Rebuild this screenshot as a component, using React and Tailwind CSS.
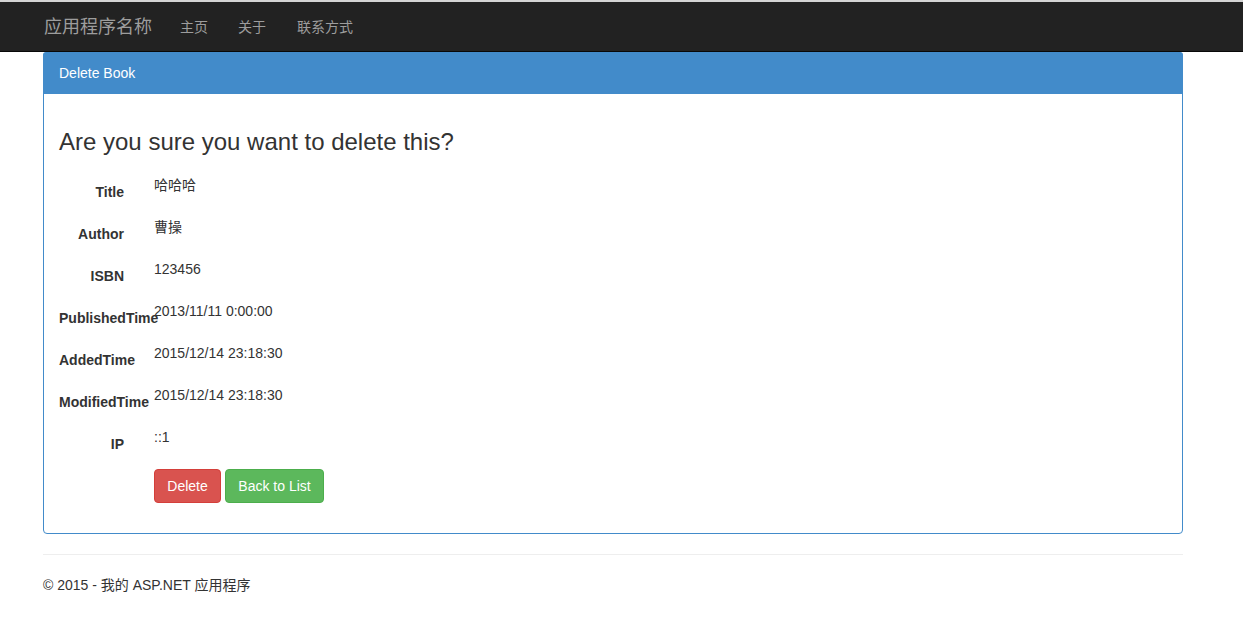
export default function App() {
  const font = { fontFamily: '"Liberation Sans", Arial, "Noto Sans CJK SC", sans-serif' };
  const rows = [
    ["Title", "哈哈哈"],
    ["Author", "曹操"],
    ["ISBN", "123456"],
    ["PublishedTime", "2013/11/11 0:00:00"],
    ["AddedTime", "2015/12/14 23:18:30"],
    ["ModifiedTime", "2015/12/14 23:18:30"],
    ["IP", "::1"],
  ];
  return (
    <div className="min-h-[635px] bg-white text-[14px] text-[#333]" style={font}>
      <div className="h-[2px] bg-[#d4d4d4]" />
      <nav className="h-[50px] bg-[#222] border-b border-[#080808]">
        <div className="pl-[44px] w-[1183px] h-full flex items-center">
          <span className="text-[18px] text-[#9d9d9d] leading-[20px]">应用程序名称</span>
          <span className="ml-[28px] text-[#9d9d9d] leading-[20px]">主页</span>
          <span className="ml-[30px] text-[#9d9d9d] leading-[20px]">关于</span>
          <span className="ml-[31px] text-[#9d9d9d] leading-[20px]">联系方式</span>
        </div>
      </nav>
      <div className="pl-[43px]">
        <div className="w-[1140px]">
          <div className="border border-[#428bca] rounded-[4px] mb-[20px]">
            <div className="bg-[#428bca] text-white h-[42px] flex items-center leading-[20px] -mt-px -mx-px rounded-t-[3px] pl-[16px]">
              Delete Book
            </div>
            <div className="px-[15px] pt-[15px] pb-[30px]">
              <h3 className="text-[24px] leading-[26px] mt-[20px] mb-[20px] font-normal">
                Are you sure you want to delete this?
              </h3>
              <div>
                {rows.map(([k, v]) => (
                  <div key={k} className="flex h-[42px]">
                    <div className="w-[65px] shrink-0 text-right font-bold whitespace-nowrap pt-[7px] leading-[20px] overflow-visible">
                      {k}
                    </div>
                    <div className="ml-[30px] leading-[20px]">{v}</div>
                  </div>
                ))}
              </div>
              <div className="flex gap-[4px] ml-[95px]">
                <button className="h-[34px] w-[67px] rounded-[4px] bg-[#d9534f] border border-[#d43f3a] text-white leading-[20px]">
                  Delete
                </button>
                <button className="h-[34px] w-[99px] rounded-[4px] bg-[#5cb85c] border border-[#4cae4c] text-white leading-[20px]">
                  Back to List
                </button>
              </div>
            </div>
          </div>
          <hr className="border-0 border-t border-[#eee] mt-[20px] mb-[20px]" />
          <footer className="leading-[20px]">© 2015 - 我的 ASP.NET 应用程序</footer>
        </div>
      </div>
    </div>
  );
}
